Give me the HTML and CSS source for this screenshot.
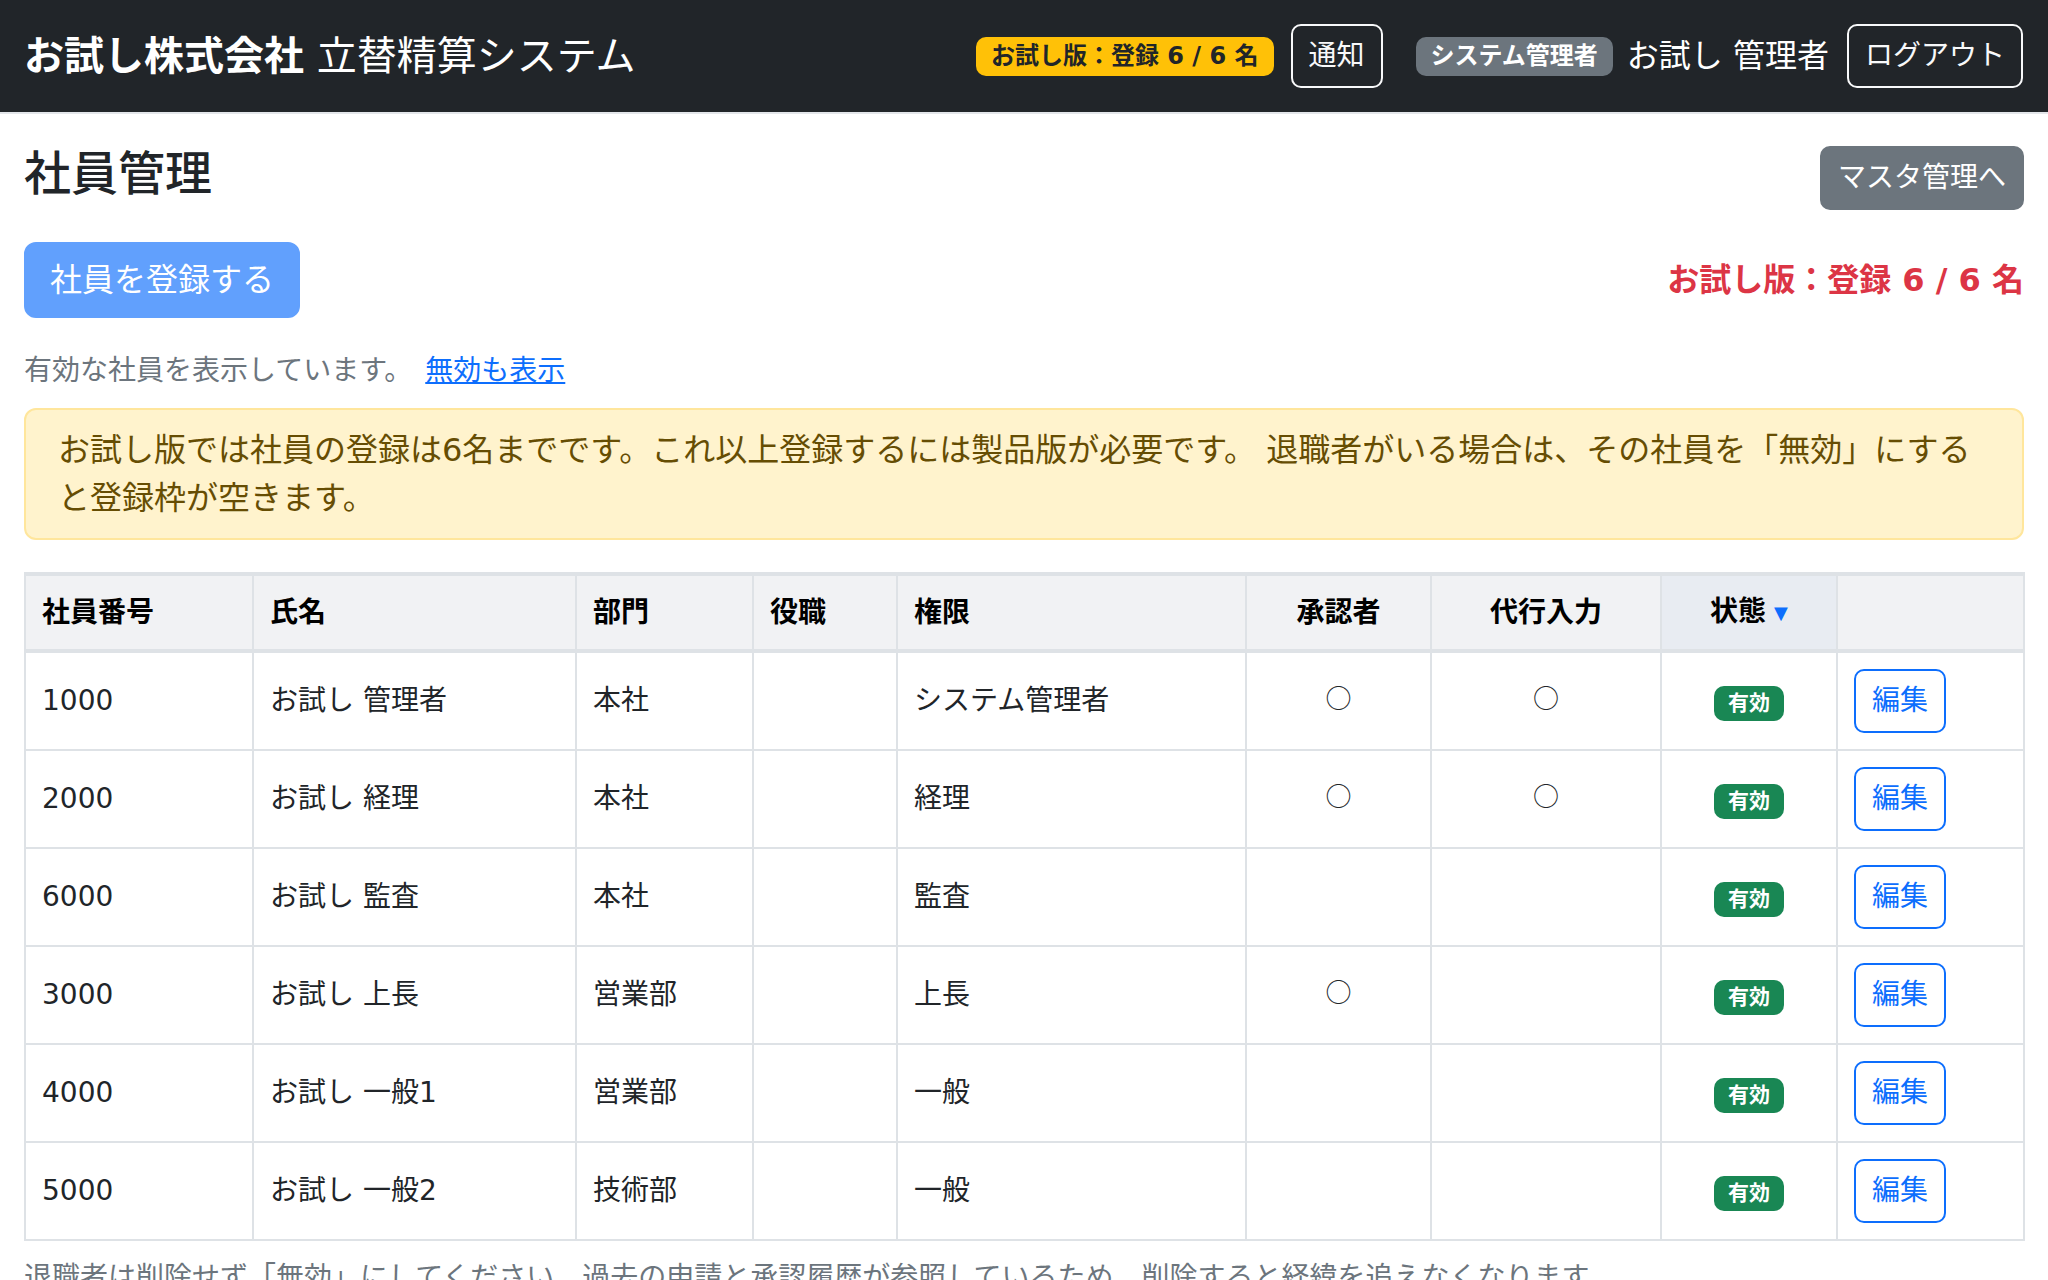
FILE: index.html
```html
<!DOCTYPE html>
<html lang="ja">
<head>
  <meta charset="UTF-8">
  <meta name="viewport" content="width=device-width, initial-scale=1.0">
  <title>社員管理 - 立替精算システム</title>
  <link rel="stylesheet" href="styles.css">
</head>
<body>

  <nav class="navbar">
    <div class="brand">
      <span class="brand-company">お試し株式会社</span>
      <span class="brand-system">立替精算システム</span>
    </div>
    <div class="nav-right">
      <span class="badge badge-warning">お試し版：登録 6 / 6 名</span>
      <button class="btn btn-sm btn-outline-light nav-notice">通知</button>
      <span class="badge badge-secondary">システム管理者</span>
      <span class="user-name">お試し 管理者</span>
      <button class="btn btn-sm btn-outline-light">ログアウト</button>
    </div>
  </nav>

  <main class="container">
    <div class="page-head">
      <h1 class="page-title">社員管理</h1>
      <button class="btn btn-sm btn-secondary">マスタ管理へ</button>
    </div>

    <div class="action-row">
      <button class="btn btn-primary" disabled>社員を登録する</button>
      <span class="trial-count">お試し版：登録 6 / 6 名</span>
    </div>

    <p class="filter-note">有効な社員を表示しています。 <a href="#" class="link">無効も表示</a></p>

    <div class="alert-warning">
      お試し版では社員の登録は6名までです。これ以上登録するには製品版が必要です。 退職者がいる場合は、その社員を「無効」にすると登録枠が空きます。
    </div>

    <table class="staff-table">
      <colgroup>
        <col style="width: 228px">
        <col style="width: 323px">
        <col style="width: 177px">
        <col style="width: 144px">
        <col style="width: 349px">
        <col style="width: 185px">
        <col style="width: 230px">
        <col style="width: 176px">
        <col style="width: 187px">
      </colgroup>
      <thead>
        <tr>
          <th>社員番号</th>
          <th>氏名</th>
          <th>部門</th>
          <th>役職</th>
          <th>権限</th>
          <th class="center">承認者</th>
          <th class="center">代行入力</th>
          <th class="center sorted">状態<span class="sort-arrow">▼</span></th>
          <th></th>
        </tr>
      </thead>
      <tbody>
        <tr>
          <td>1000</td>
          <td>お試し 管理者</td>
          <td>本社</td>
          <td></td>
          <td>システム管理者</td>
          <td class="center mark">○</td>
          <td class="center mark">○</td>
          <td class="center"><span class="badge badge-success">有効</span></td>
          <td><button class="btn btn-sm btn-outline-primary">編集</button></td>
        </tr>
        <tr>
          <td>2000</td>
          <td>お試し 経理</td>
          <td>本社</td>
          <td></td>
          <td>経理</td>
          <td class="center mark">○</td>
          <td class="center mark">○</td>
          <td class="center"><span class="badge badge-success">有効</span></td>
          <td><button class="btn btn-sm btn-outline-primary">編集</button></td>
        </tr>
        <tr>
          <td>6000</td>
          <td>お試し 監査</td>
          <td>本社</td>
          <td></td>
          <td>監査</td>
          <td class="center mark"></td>
          <td class="center mark"></td>
          <td class="center"><span class="badge badge-success">有効</span></td>
          <td><button class="btn btn-sm btn-outline-primary">編集</button></td>
        </tr>
        <tr>
          <td>3000</td>
          <td>お試し 上長</td>
          <td>営業部</td>
          <td></td>
          <td>上長</td>
          <td class="center mark">○</td>
          <td class="center mark"></td>
          <td class="center"><span class="badge badge-success">有効</span></td>
          <td><button class="btn btn-sm btn-outline-primary">編集</button></td>
        </tr>
        <tr>
          <td>4000</td>
          <td>お試し 一般1</td>
          <td>営業部</td>
          <td></td>
          <td>一般</td>
          <td class="center mark"></td>
          <td class="center mark"></td>
          <td class="center"><span class="badge badge-success">有効</span></td>
          <td><button class="btn btn-sm btn-outline-primary">編集</button></td>
        </tr>
        <tr>
          <td>5000</td>
          <td>お試し 一般2</td>
          <td>技術部</td>
          <td></td>
          <td>一般</td>
          <td class="center mark"></td>
          <td class="center mark"></td>
          <td class="center"><span class="badge badge-success">有効</span></td>
          <td><button class="btn btn-sm btn-outline-primary">編集</button></td>
        </tr>
      </tbody>
    </table>

    <p class="footer-note">退職者は削除せず「無効」にしてください。過去の申請と承認履歴が参照しているため、削除すると経緯を追えなくなります。</p>
  </main>

</body>
</html>
```

FILE: styles.css
```css
/* General */
body {
  font-family: "DejaVu Sans", "Noto Sans CJK JP", sans-serif;
  font-size: 32px;
  line-height: 1.5;
  color: #212529;
  margin: 0;
  background: #fff;
}

/* Navbar */
.navbar {
  display: flex;
  justify-content: space-between;
  align-items: center;
  height: 112px;
  padding: 0 25px 0 24px;
  background: #212529;
  border-bottom: 2px solid #e3e6ea;
}

.brand {
  color: #fff;
  font-size: 40px;
  line-height: 60px;
  white-space: nowrap;
}

.brand-company {
  font-weight: 700;
}

.brand-system {
  font-weight: 400;
}

.nav-right {
  display: flex;
  align-items: center;
}

.nav-notice {
  margin-left: 17px;
  margin-right: 33px;
}

.user-name {
  color: #fff;
  font-size: 32px;
  margin: 0 18px 0 14px;
  white-space: nowrap;
}

/* Badges */
.badge {
  display: inline-block;
  font-weight: 700;
  line-height: 1;
  white-space: nowrap;
  border-radius: 10px;
}

.badge-warning {
  background: #ffc107;
  color: #212529;
  font-size: 24px;
  padding: 7px 15px 8px;
}

.badge-secondary {
  background: #6c757d;
  color: #fff;
  font-size: 24px;
  padding: 7px 15px 8px;
}

.badge-success {
  background: #198754;
  color: #fff;
  font-size: 21px;
  padding: 7px 14px;
}

/* Buttons */
.btn {
  font-family: inherit;
  font-size: 32px;
  line-height: 48px;
  padding: 12px 24px;
  border: 2px solid transparent;
  border-radius: 12px;
  cursor: pointer;
  white-space: nowrap;
}

.btn-sm {
  font-size: 28px;
  line-height: 42px;
  padding: 9px 16px;
  border-radius: 10px;
}

.btn-outline-light {
  background: transparent;
  color: #f8f9fa;
  border-color: #f8f9fa;
}

.btn-secondary {
  background: #6c757d;
  color: #fff;
  border-color: #6c757d;
}

.btn-primary {
  background: #0d6efd;
  color: #fff;
  border-color: #0d6efd;
}

.btn-primary:disabled {
  opacity: 0.65;
  cursor: default;
}

.btn-outline-primary {
  background: #fff;
  color: #0d6efd;
  border-color: #0d6efd;
}

/* Page */
.container {
  padding: 0 24px;
}

.page-head {
  display: flex;
  justify-content: space-between;
  align-items: flex-start;
  margin-top: 32px;
  margin-bottom: 32px;
}

.page-title {
  font-size: 47px;
  font-weight: 500;
  line-height: 1.2;
  margin: 0;
}

.action-row {
  display: flex;
  justify-content: space-between;
  align-items: center;
  margin-bottom: 32px;
}

.trial-count {
  color: #dc3545;
  font-weight: 700;
  font-size: 32px;
}

.filter-note {
  color: #6c757d;
  font-size: 28px;
  margin: 0 0 16px;
}

.link {
  color: #0d6efd;
  text-decoration: underline;
  margin-left: 4px;
}

.alert-warning {
  background: #fff3cd;
  color: #664d03;
  border: 2px solid #ffe69c;
  border-radius: 12px;
  padding: 16px 32px;
  margin-bottom: 32px;
}

/* Table */
.staff-table {
  width: 100%;
  table-layout: fixed;
  border-collapse: collapse;
  font-size: 28px;
}

.staff-table th,
.staff-table td {
  border: 2px solid #dee2e6;
  padding: 16px;
  text-align: left;
  vertical-align: middle;
  white-space: nowrap;
}

.staff-table th {
  background: #f1f2f4;
  color: #000;
  font-weight: 700;
  line-height: 42px;
  padding-top: 15px;
  padding-bottom: 15px;
  border-top-width: 4px;
  border-bottom-width: 4px;
}

.staff-table td {
  height: 64px;
}

.staff-table .center {
  text-align: center;
}

.staff-table th.sorted {
  background: #e8ecf2;
}

.sort-arrow {
  color: #0d6efd;
  font-size: 18px;
  margin-left: 8px;
  vertical-align: 2px;
}

.staff-table td.mark {
  font-family: "Noto Sans CJK JP", sans-serif;
  font-size: 26px;
  padding-top: 11px;
  padding-bottom: 21px;
}

.footer-note {
  color: #6c757d;
  font-size: 28px;
  margin: 16px 0 0;
}
```
